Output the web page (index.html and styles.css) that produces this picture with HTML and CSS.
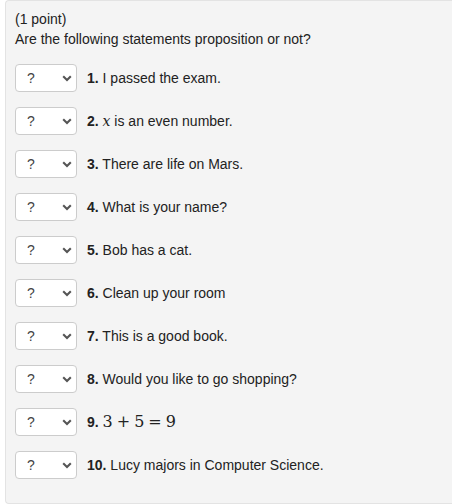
FILE: index.html
```html
<!DOCTYPE html>
<html>
<head>
<meta charset="utf-8">
<link rel="stylesheet" href="styles.css">
</head>
<body>
<div class="well">
  <div class="intro">
    <div>(1 point)</div>
    <div>Are the following statements proposition or not?</div>
  </div>
  <div class="row">
    <span class="pick"><select><option>?</option><option>Yes</option><option>No</option></select><svg class="chev" viewBox="0 0 10 7" width="10" height="7"><path d="M1.2 1.3 L5 5 L8.8 1.3" fill="none" stroke="#555" stroke-width="2.1"/></svg></span>
    <span class="stmt"><b>1.</b> I passed the exam.</span>
  </div>
  <div class="row">
    <span class="pick"><select><option>?</option><option>Yes</option><option>No</option></select><svg class="chev" viewBox="0 0 10 7" width="10" height="7"><path d="M1.2 1.3 L5 5 L8.8 1.3" fill="none" stroke="#555" stroke-width="2.1"/></svg></span>
    <span class="stmt"><b>2.</b> <span class="mi">x</span> is an even number.</span>
  </div>
  <div class="row">
    <span class="pick"><select><option>?</option><option>Yes</option><option>No</option></select><svg class="chev" viewBox="0 0 10 7" width="10" height="7"><path d="M1.2 1.3 L5 5 L8.8 1.3" fill="none" stroke="#555" stroke-width="2.1"/></svg></span>
    <span class="stmt"><b>3.</b> There are life on Mars.</span>
  </div>
  <div class="row">
    <span class="pick"><select><option>?</option><option>Yes</option><option>No</option></select><svg class="chev" viewBox="0 0 10 7" width="10" height="7"><path d="M1.2 1.3 L5 5 L8.8 1.3" fill="none" stroke="#555" stroke-width="2.1"/></svg></span>
    <span class="stmt"><b>4.</b> What is your name?</span>
  </div>
  <div class="row">
    <span class="pick"><select><option>?</option><option>Yes</option><option>No</option></select><svg class="chev" viewBox="0 0 10 7" width="10" height="7"><path d="M1.2 1.3 L5 5 L8.8 1.3" fill="none" stroke="#555" stroke-width="2.1"/></svg></span>
    <span class="stmt"><b>5.</b> Bob has a cat.</span>
  </div>
  <div class="row">
    <span class="pick"><select><option>?</option><option>Yes</option><option>No</option></select><svg class="chev" viewBox="0 0 10 7" width="10" height="7"><path d="M1.2 1.3 L5 5 L8.8 1.3" fill="none" stroke="#555" stroke-width="2.1"/></svg></span>
    <span class="stmt"><b>6.</b> Clean up your room</span>
  </div>
  <div class="row">
    <span class="pick"><select><option>?</option><option>Yes</option><option>No</option></select><svg class="chev" viewBox="0 0 10 7" width="10" height="7"><path d="M1.2 1.3 L5 5 L8.8 1.3" fill="none" stroke="#555" stroke-width="2.1"/></svg></span>
    <span class="stmt"><b>7.</b> This is a good book.</span>
  </div>
  <div class="row">
    <span class="pick"><select><option>?</option><option>Yes</option><option>No</option></select><svg class="chev" viewBox="0 0 10 7" width="10" height="7"><path d="M1.2 1.3 L5 5 L8.8 1.3" fill="none" stroke="#555" stroke-width="2.1"/></svg></span>
    <span class="stmt"><b>8.</b> Would you like to go shopping?</span>
  </div>
  <div class="row">
    <span class="pick"><select><option>?</option><option>Yes</option><option>No</option></select><svg class="chev" viewBox="0 0 10 7" width="10" height="7"><path d="M1.2 1.3 L5 5 L8.8 1.3" fill="none" stroke="#555" stroke-width="2.1"/></svg></span>
    <span class="stmt"><b>9.</b> <span class="math">3<span class="op">+</span>5<span class="op">=</span>9</span></span>
  </div>
  <div class="row">
    <span class="pick"><select><option>?</option><option>Yes</option><option>No</option></select><svg class="chev" viewBox="0 0 10 7" width="10" height="7"><path d="M1.2 1.3 L5 5 L8.8 1.3" fill="none" stroke="#555" stroke-width="2.1"/></svg></span>
    <span class="stmt"><b>10.</b> Lucy majors in Computer Science.</span>
  </div>
</div>
</body>
</html>
```
FILE: styles.css
```css
html, body {
  margin: 0;
  padding: 0;
  background: #ffffff;
}
body {
  font-family: "Liberation Sans", Arial, sans-serif;
  font-size: 14px;
  line-height: 20px;
  color: #222;
}
.well {
  margin-left: 5px;
  background: #f4f4f4;
  border: 1px solid #e3e3e3;
  border-right: none;
  border-radius: 4px 0 0 4px;
  padding: 8px 0 8px 9px;
  box-sizing: border-box;
  height: 504px;
}
.intro {
  margin-bottom: 15px;
}
.row {
  display: flex;
  align-items: center;
  height: 28px;
  margin-bottom: 15px;
}
.pick {
  position: relative;
  display: inline-block;
  width: 62px;
  height: 28px;
  flex: none;
}
.pick select {
  appearance: none;
  -webkit-appearance: none;
  width: 62px;
  height: 28px;
  margin: 0;
  padding: 0 0 0 11px;
  border: 1px solid #cccccc;
  border-radius: 4px;
  background: #ffffff;
  font-family: "Liberation Sans", Arial, sans-serif;
  font-size: 14px;
  color: #444;
  box-sizing: border-box;
}
.chev {
  position: absolute;
  left: 47px;
  top: 11px;
  pointer-events: none;
}
.stmt {
  margin-left: 10px;
  white-space: nowrap;
}
.stmt b {
  font-weight: bold;
}
.mi {
  font-family: "DejaVu Serif", "Liberation Serif", serif;
  font-style: italic;
  font-size: 14px;
}
.math {
  font-family: "DejaVu Serif", "Liberation Serif", serif;
  font-size: 16px;
}
.op {
  padding: 0 4px;
}
```
